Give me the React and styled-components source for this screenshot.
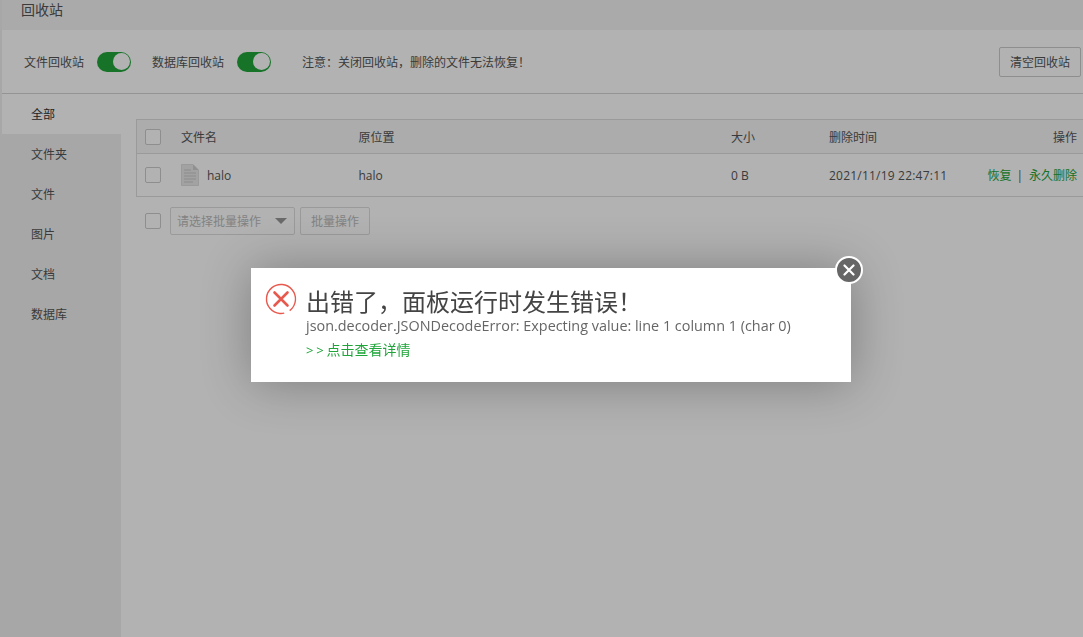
import React from "react";
import styled, { createGlobalStyle } from "styled-components";

const GlobalStyle = createGlobalStyle`
  html, body {
    margin: 0;
    height: 100%;
    overflow: hidden;
    background: #f0f0f0;
    font-family: "Open Sans", "Noto Sans CJK SC", sans-serif;
    font-size: 12px;
    color: #555;
  }
`;

const Page = styled.div`
  height: 637px;
  padding-left: 2px;
  display: flex;
  flex-direction: column;
`;

const TitleBar = styled.div`
  height: 30px;
  flex-shrink: 0;
  background: #f4f4f4;
  padding: 0 0 0 19px;
  font-size: 14px;
  line-height: 20px;
  color: #555;
`;

const Toolbar = styled.div`
  height: 63px;
  flex-shrink: 0;
  background: #fff;
  border-bottom: 1px solid #d5d5d5;
  display: flex;
  align-items: center;
  padding-left: 22px;
`;

const ToolLabel = styled.span`
  margin-right: ${(p) => p.$gap}px;
  white-space: nowrap;
`;

const Switch = styled.div`
  width: 34px;
  height: 20px;
  border-radius: 10px;
  background: #20a53a;
  flex-shrink: 0;
  margin-right: ${(p) => p.$gap}px;
  display: flex;
  justify-content: flex-end;
  align-items: center;
  padding-right: 1px;
  box-sizing: border-box;
`;

const Knob = styled.div`
  width: 17px;
  height: 17px;
  border-radius: 50%;
  background: #fff;
`;

const ClearButton = styled.button`
  margin-left: auto;
  margin-right: 2px;
  width: 82px;
  height: 30px;
  background: #fff;
  border: 1px solid #ccc;
  border-radius: 2px;
  font: inherit;
  color: #555;
  padding: 0;
`;

const Body = styled.div`
  flex: 1;
  display: flex;
  background: #fff;
`;

const Sidebar = styled.div`
  width: 119px;
  flex-shrink: 0;
  background: #f0f0f0;
`;

const NavItem = styled.div`
  height: 40px;
  line-height: 42px;
  padding-left: 29px;
  background: ${(p) => (p.$active ? "#fff" : "transparent")};
  color: ${(p) => (p.$active ? "#333" : "#555")};
`;

const Content = styled.div`
  flex: 1;
  min-width: 0;
  padding: 25px 0 0 15px;
`;

const Table = styled.div`
  border: 1px solid #ddd;
  border-right: 0;
`;

const Row = styled.div`
  display: grid;
  grid-template-columns: 44px 177.5px 372.5px 98px 1fr 106px;
  align-items: center;
  height: ${(p) => p.$h}px;
  background: ${(p) => (p.$head ? "#f6f6f6" : "#fff")};
  border-bottom: ${(p) => (p.$head ? "1px solid #ddd" : "0")};
`;

const CheckCell = styled.div`
  display: flex;
  padding-left: 8px;
`;

const Check = styled.div`
  width: 14px;
  height: 14px;
  border: 1px solid #ccc;
  border-radius: 2px;
  background: #fff;
`;

const NameCell = styled.div`
  display: flex;
  align-items: center;
  gap: 8px;
`;

const DateCell = styled.div`
  letter-spacing: 0.21px;
`;

const Actions = styled.div`
  text-align: right;
  padding-right: 6px;
  white-space: nowrap;
  color: ${(p) => (p.$head ? "#555" : "#20a53a")};
`;

const Divider = styled.span`
  margin: 0 6px 0 5px;
  color: #555;
`;

const BatchRow = styled.div`
  display: flex;
  align-items: center;
  margin-top: 10px;
  padding-left: 9px;
`;

const BatchCheck = styled(Check)`
  margin-right: 9px;
`;

const BatchSelect = styled.div`
  width: 125px;
  height: 28px;
  box-sizing: border-box;
  border: 1px solid #ddd;
  border-radius: 2px;
  display: flex;
  align-items: center;
  padding: 0 0 1px 6px;
  color: #bbb;
  margin-right: 5px;
  position: relative;
`;

const Caret = styled.span`
  margin-left: auto;
  margin-right: 7px;
  width: 0;
  height: 0;
  border-left: 6px solid transparent;
  border-right: 6px solid transparent;
  border-top: 6px solid #999;
`;

const BatchButton = styled.div`
  width: 70px;
  height: 28px;
  box-sizing: border-box;
  border: 1px solid #ddd;
  border-radius: 2px;
  display: flex;
  align-items: center;
  justify-content: center;
  color: #bbb;
`;

const Overlay = styled.div`
  position: fixed;
  inset: 0;
  background: rgba(0, 0, 0, 0.3);
`;

const Modal = styled.div`
  position: absolute;
  left: 251px;
  top: 268px;
  width: 600px;
  height: 114px;
  background: #fff;
  box-shadow: 1px 1px 50px rgba(0, 0, 0, 0.3);
  display: flex;
  padding: 15px 0 0 14px;
  box-sizing: border-box;
`;

const ErrorIcon = styled.svg`
  width: 32px;
  height: 32px;
  flex-shrink: 0;
  margin-right: 9px;
`;

const ModalText = styled.div`
  display: flex;
  flex-direction: column;
  min-width: 0;
`;

const ModalTitle = styled.div`
  font-size: 24px;
  line-height: 30px;
  margin-top: 4px;
  color: #444;
  white-space: nowrap;
`;

const ModalMessage = styled.div`
  font-size: 14.4px;
  line-height: 18px;
  color: #666;
  white-space: nowrap;
`;

const ModalLink = styled.div`
  margin-top: 6px;
  font-size: 14px;
  line-height: 18px;
  color: #20a53a;
`;

const Arrows = styled.span`
  font-size: 13px;
  letter-spacing: 2.8px;
`;

const CloseButton = styled.div`
  position: absolute;
  right: -12px;
  top: -12px;
  width: 24px;
  height: 24px;
  border: 2px solid #fff;
  border-radius: 50%;
  background: #666;
  display: flex;
  align-items: center;
  justify-content: center;
`;

const navItems = ["全部", "文件夹", "文件", "图片", "文档", "数据库"];

const FileIcon = () => (
  <svg width="18" height="22" viewBox="0 0 18 22">
    <path d="M0.5 0.5H12L17.5 6V21.5H0.5Z" fill="#e8e8e8" stroke="#ddd" />
    <path d="M12 0.5V6H17.5Z" fill="#cfcfcf" />
    <path d="M3 6H10M3 9H15M3 12H15M3 15H15M3 18H12" stroke="#c8c8c8" strokeWidth="1" />
  </svg>
);

export default function App() {
  return (
    <>
      <GlobalStyle />
      <Page>
        <TitleBar>回收站</TitleBar>
        <Toolbar>
          <ToolLabel $gap={13}>文件回收站</ToolLabel>
          <Switch $gap={21}><Knob /></Switch>
          <ToolLabel $gap={13}>数据库回收站</ToolLabel>
          <Switch $gap={31}><Knob /></Switch>
          <ToolLabel $gap={0}>注意：关闭回收站，删除的文件无法恢复！</ToolLabel>
          <ClearButton>清空回收站</ClearButton>
        </Toolbar>
        <Body>
          <Sidebar>
            {navItems.map((item, i) => (
              <NavItem key={item} $active={i === 0}>{item}</NavItem>
            ))}
          </Sidebar>
          <Content>
            <Table>
              <Row $head $h={33}>
                <CheckCell><Check /></CheckCell>
                <div>文件名</div>
                <div>原位置</div>
                <div>大小</div>
                <div>删除时间</div>
                <Actions $head>操作</Actions>
              </Row>
              <Row $h={42}>
                <CheckCell><Check /></CheckCell>
                <NameCell><FileIcon />halo</NameCell>
                <div>halo</div>
                <div>0 B</div>
                <DateCell>2021/11/19 22:47:11</DateCell>
                <Actions>恢复<Divider>|</Divider>永久删除</Actions>
              </Row>
            </Table>
            <BatchRow>
              <BatchCheck />
              <BatchSelect>请选择批量操作<Caret /></BatchSelect>
              <BatchButton>批量操作</BatchButton>
            </BatchRow>
          </Content>
        </Body>
      </Page>
      <Overlay />
      <Modal>
        <ErrorIcon viewBox="0 0 32 32">
          <circle cx="16" cy="16" r="14.5" fill="none" stroke="#e8594d" strokeWidth="1.4" strokeDasharray="80 6" transform="rotate(95 16 16)" />
          <path d="M9.5 9.5L22.5 22.5M22.5 9.5L9.5 22.5" stroke="#e8594d" strokeWidth="2.6" strokeLinecap="round" />
        </ErrorIcon>
        <ModalText>
          <ModalTitle>出错了，面板运行时发生错误！</ModalTitle>
          <ModalMessage>json.decoder.JSONDecodeError: Expecting value: line 1 column 1 (char 0)</ModalMessage>
          <ModalLink><Arrows>&gt;&gt;</Arrows>点击查看详情</ModalLink>
        </ModalText>
        <CloseButton>
          <svg width="12" height="12" viewBox="0 0 12 12">
            <path d="M1.5 1.5L10.5 10.5M10.5 1.5L1.5 10.5" stroke="#fff" strokeWidth="2.2" strokeLinecap="round" />
          </svg>
        </CloseButton>
      </Modal>
    </>
  );
}
